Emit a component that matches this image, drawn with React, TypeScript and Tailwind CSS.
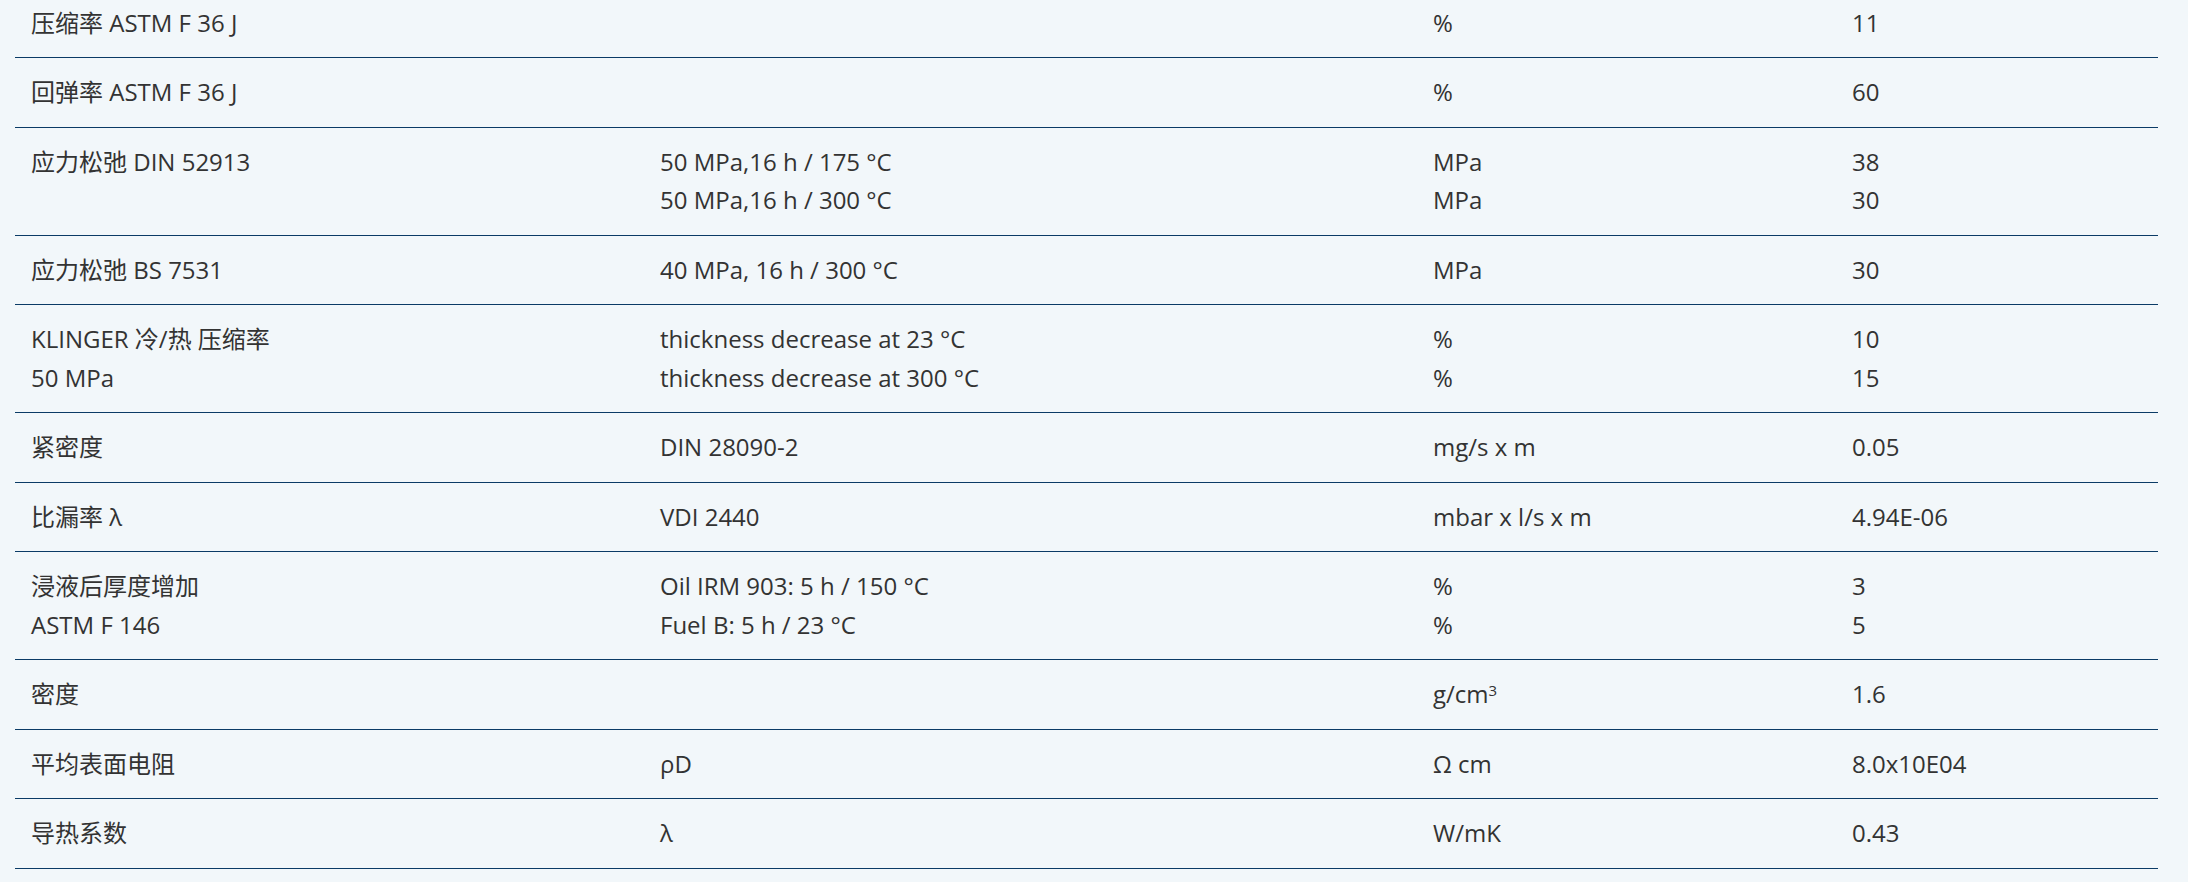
import type { ReactNode } from "react";

type Row = {
	name: ReactNode[];
	cond: ReactNode[];
	unit: ReactNode[];
	value: ReactNode[];
};

const rows: Row[] = [
	{ name: ["压缩率 ASTM F 36 J"], cond: [], unit: ["%"], value: ["11"] },
	{ name: ["回弹率 ASTM F 36 J"], cond: [], unit: ["%"], value: ["60"] },
	{
		name: ["应力松弛 DIN 52913"],
		cond: ["50 MPa,16 h / 175 °C", "50 MPa,16 h / 300 °C"],
		unit: ["MPa", "MPa"],
		value: ["38", "30"],
	},
	{
		name: ["应力松弛 BS 7531"],
		cond: ["40 MPa, 16 h / 300 °C"],
		unit: ["MPa"],
		value: ["30"],
	},
	{
		name: ["KLINGER 冷/热 压缩率", "50 MPa"],
		cond: ["thickness decrease at 23 °C", "thickness decrease at 300 °C"],
		unit: ["%", "%"],
		value: ["10", "15"],
	},
	{ name: ["紧密度"], cond: ["DIN 28090-2"], unit: ["mg/s x m"], value: ["0.05"] },
	{ name: ["比漏率 λ"], cond: ["VDI 2440"], unit: ["mbar x l/s x m"], value: ["4.94E-06"] },
	{
		name: ["浸液后厚度增加", "ASTM F 146"],
		cond: ["Oil IRM 903: 5 h / 150 °C", "Fuel B: 5 h / 23 °C"],
		unit: ["%", "%"],
		value: ["3", "5"],
	},
	{
		name: ["密度"],
		cond: [],
		unit: [
			<>
				g/cm<sup className="text-[15px]">3</sup>
			</>,
		],
		value: ["1.6"],
	},
	{ name: ["平均表面电阻"], cond: ["ρD"], unit: ["Ω cm"], value: ["8.0x10E04"] },
	{ name: ["导热系数"], cond: ["λ"], unit: ["W/mK"], value: ["0.43"] },
];

function Cell({ lines }: { lines: ReactNode[] }) {
	return (
		<div className="px-4 flex flex-col">
			{lines.map((line, i) => (
				<div key={i} className="h-[38.5px] leading-[38.5px] whitespace-nowrap">
					{line}
				</div>
			))}
		</div>
	);
}

export default function App() {
	return (
		<div className="min-h-screen bg-[#f2f7fa] overflow-hidden font-['Open_Sans','Noto_Sans_CJK_SC',sans-serif] text-[24px] text-[#333333]">
			<div className="ml-[15px] w-[2143px] -mt-[11.5px]">
				{rows.map((row, i) => (
					<div
						key={i}
						className="grid grid-cols-[629px_773px_419px_322px] py-[15px] border-b border-[#0b3b66]"
					>
						<Cell lines={row.name} />
						<Cell lines={row.cond} />
						<Cell lines={row.unit} />
						<Cell lines={row.value} />
					</div>
				))}
			</div>
		</div>
	);
}
